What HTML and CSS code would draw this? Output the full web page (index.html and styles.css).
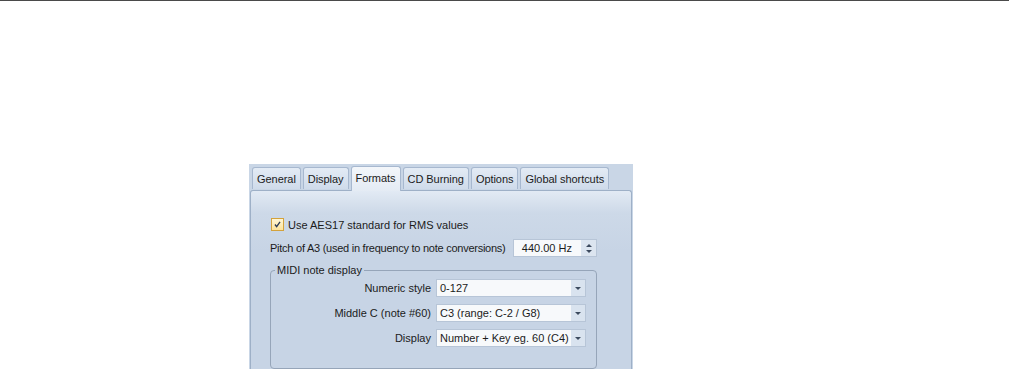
FILE: index.html
```html
<!DOCTYPE html>
<html lang="en">
<head>
    <meta charset="UTF-8">
    <meta name="viewport" content="width=device-width, initial-scale=1.0">
    <title>Preferences - Formats</title>
    <link rel="stylesheet" href="styles.css">
</head>
<body>

    <div class="top-rule"></div>

    <div class="dialog">
        <div class="tabs">
            <div class="tab">General</div>
            <div class="tab">Display</div>
            <div class="tab active">Formats</div>
            <div class="tab">CD Burning</div>
            <div class="tab">Options</div>
            <div class="tab">Global shortcuts</div>
        </div>

        <div class="panel">
            <label class="check-row">
                <span class="checkbox">
                    <svg width="13" height="13" viewBox="0 0 13 13">
                        <path d="M3.5 6.5 L5.5 9 L9.5 3.5" fill="none" stroke="#2b3a55" stroke-width="1.6"/>
                    </svg>
                </span>
                Use AES17 standard for RMS values
            </label>

            <div class="pitch-row">
                <span class="pitch-label">Pitch of A3 (used in frequency to note conversions)</span>
                <div class="spin">
                    <span class="spin-value">440.00 Hz</span>
                    <span class="spin-buttons">
                        <i class="arrow-up"></i>
                        <i class="arrow-down"></i>
                    </span>
                </div>
            </div>

            <fieldset class="group">
                <legend>MIDI note display</legend>
                <div class="group-grid">
                    <span class="field-label">Numeric style</span>
                    <div class="combo"><span>0-127</span><span class="combo-btn"><i class="arrow-down"></i></span></div>

                    <span class="field-label">Middle C (note #60)</span>
                    <div class="combo"><span>C3 (range: C-2 / G8)</span><span class="combo-btn"><i class="arrow-down"></i></span></div>

                    <span class="field-label">Display</span>
                    <div class="combo"><span>Number + Key eg. 60 (C4)</span><span class="combo-btn"><i class="arrow-down"></i></span></div>
                </div>
            </fieldset>
        </div>
    </div>

</body>
</html>
```

FILE: styles.css
```css
body {
    margin: 0;
    background: #fff;
    font-family: "Liberation Sans", Arial, sans-serif;
    font-size: 11px;
    color: #1b1b1b;
}
.top-rule {
    height: 1px;
    background: #4a4a4a;
}
.dialog {
    margin: 163px 0 0 249px;
    width: 384px;
    height: 205px;
    padding-top: 2px;
    background: #c9d6e6;
    box-sizing: border-box;
}
.tabs {
    display: flex;
    align-items: flex-end;
    gap: 2px;
    padding-left: 3px;
    height: 24px;
}
.tab {
    height: 22px;
    padding: 0 4px;
    display: flex;
    align-items: center;
    white-space: nowrap;
    letter-spacing: -0.05px;
    border: 1px solid #a7b8cf;
    border-bottom: none;
    border-radius: 3px 3px 0 0;
    background: linear-gradient(#e3ebf5, #cfdbea);
    box-sizing: border-box;
    margin-bottom: 1px;
}
.tab.active {
    height: 25px;
    margin-bottom: -1px;
    padding-bottom: 3px;
    background: linear-gradient(#f3f6fa, #e4ebf4);
    position: relative;
    z-index: 1;
}
.panel {
    margin-left: 1px;
    width: 382px;
    height: 180px;
    border: 1px solid #9eb0c7;
    border-bottom: none;
    border-radius: 3px 3px 0 0;
    background: linear-gradient(#e2eaf4 0, #cdd9e8 22px, #c7d4e5 60px);
    padding: 25px 34px 0 19px;
    box-sizing: border-box;
}
.check-row {
    display: flex;
    align-items: center;
    gap: 4px;
    height: 17px;
    padding-left: 1px;
    white-space: nowrap;
}
.checkbox {
    width: 11px;
    height: 11px;
    border: 1px solid #d3a23c;
    background: linear-gradient(#fff6d6, #fde39a);
    display: flex;
    align-items: center;
    justify-content: center;
}
.checkbox svg {
    width: 11px;
    height: 11px;
}
.pitch-row {
    margin-top: 5px;
    height: 20px;
    display: flex;
    align-items: center;
    justify-content: space-between;
}
.pitch-label {
    white-space: nowrap;
    letter-spacing: -0.25px;
}
.spin {
    width: 84px;
    height: 18px;
    display: flex;
    flex-shrink: 0;
    border: 1px solid #b7c5d7;
    background: #f7f9fb;
    box-sizing: border-box;
}
.spin-value {
    flex: 1;
    display: flex;
    align-items: center;
    justify-content: flex-end;
    padding-right: 9px;
}
.spin-buttons {
    width: 15px;
    display: flex;
    flex-direction: column;
    align-items: center;
    justify-content: center;
    gap: 3px;
    background: #dce5f0;
}
.arrow-up,
.arrow-down {
    display: block;
    width: 0;
    height: 0;
    border-left: 3px solid transparent;
    border-right: 3px solid transparent;
}
.arrow-up {
    border-bottom: 3px solid #3c4a5e;
}
.arrow-down {
    border-top: 3px solid #3c4a5e;
}
.group {
    margin: 6px 0 0 0;
    padding: 3px 10px 21px 0;
    border: 1px solid #96a5b9;
    border-radius: 4px;
}
.group legend {
    padding: 0 2px;
    margin-left: 4px;
}
.group-grid {
    display: grid;
    grid-template-columns: 160px 150px;
    grid-auto-rows: 18px;
    column-gap: 5px;
    row-gap: 7px;
    align-items: center;
}
.field-label {
    text-align: right;
    white-space: nowrap;
}
.combo {
    height: 18px;
    display: flex;
    border: 1px solid #b7c5d7;
    background: #f7f9fb;
    box-sizing: border-box;
    white-space: nowrap;
}
.combo span:first-child {
    flex: 1;
    display: flex;
    align-items: center;
    padding-left: 3px;
}
.combo-btn {
    width: 14px;
    display: flex;
    align-items: center;
    justify-content: center;
    background: #d9e3ef;
}
```
